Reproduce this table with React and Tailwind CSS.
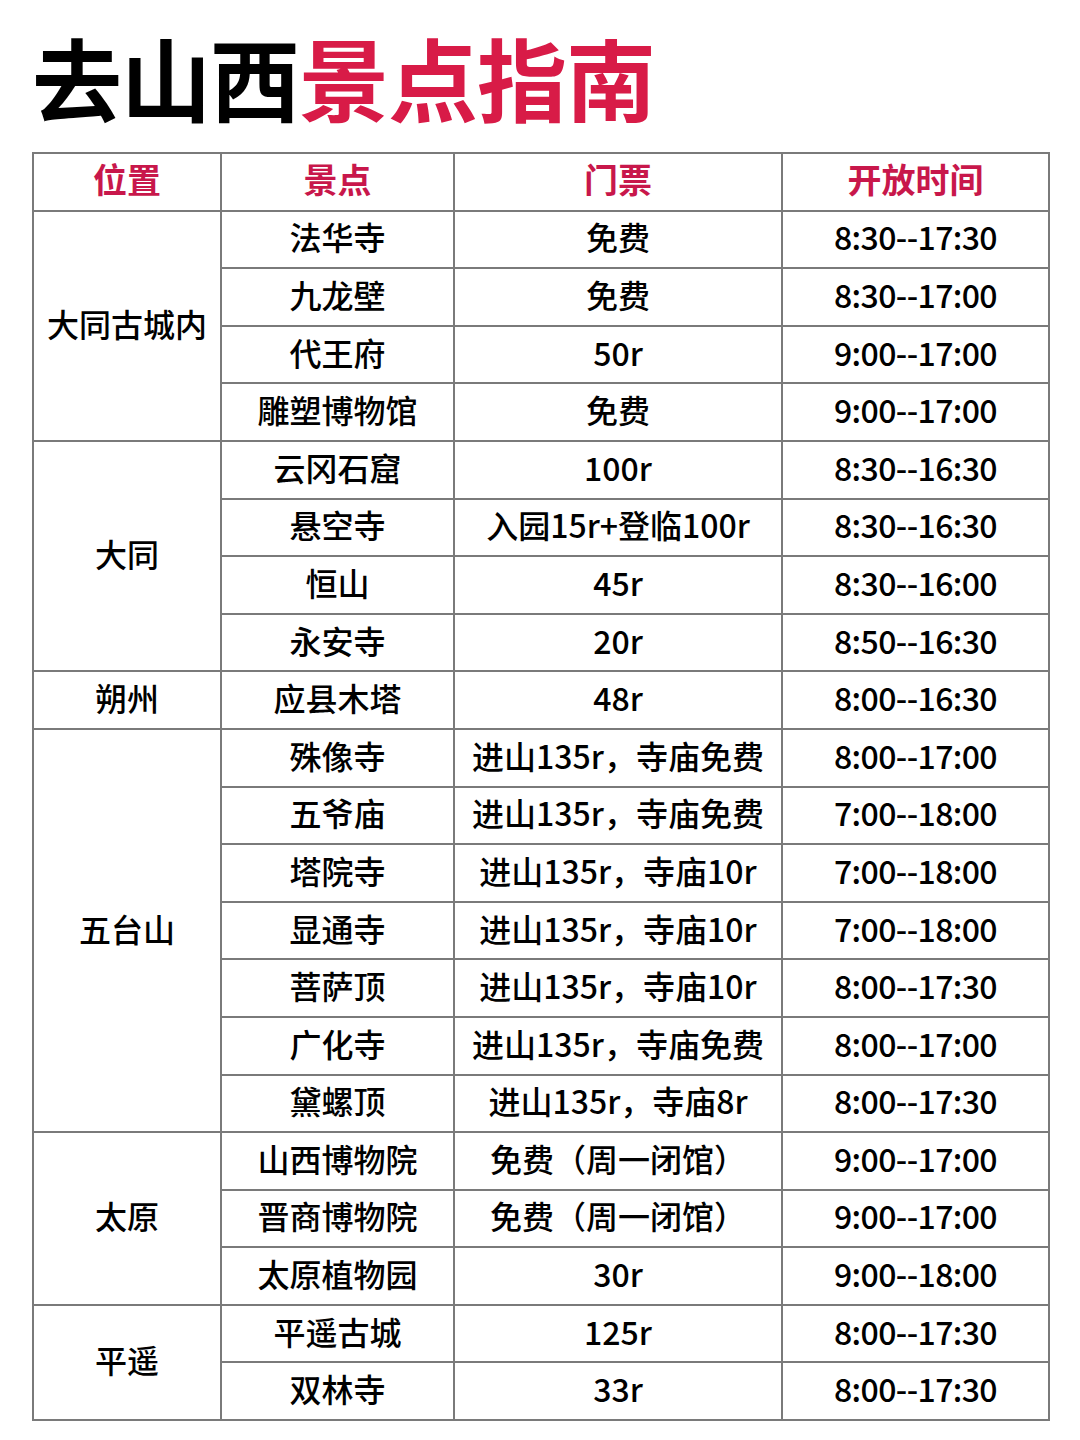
const groups = [
  {
    place: "大同古城内",
    rows: [
      ["法华寺", "免费", "8:30--17:30"],
      ["九龙壁", "免费", "8:30--17:00"],
      ["代王府", "50r", "9:00--17:00"],
      ["雕塑博物馆", "免费", "9:00--17:00"],
    ],
  },
  {
    place: "大同",
    rows: [
      ["云冈石窟", "100r", "8:30--16:30"],
      ["悬空寺", "入园15r+登临100r", "8:30--16:30"],
      ["恒山", "45r", "8:30--16:00"],
      ["永安寺", "20r", "8:50--16:30"],
    ],
  },
  {
    place: "朔州",
    rows: [["应县木塔", "48r", "8:00--16:30"]],
  },
  {
    place: "五台山",
    rows: [
      ["殊像寺", "进山135r，寺庙免费", "8:00--17:00"],
      ["五爷庙", "进山135r，寺庙免费", "7:00--18:00"],
      ["塔院寺", "进山135r，寺庙10r", "7:00--18:00"],
      ["显通寺", "进山135r，寺庙10r", "7:00--18:00"],
      ["菩萨顶", "进山135r，寺庙10r", "8:00--17:30"],
      ["广化寺", "进山135r，寺庙免费", "8:00--17:00"],
      ["黛螺顶", "进山135r，寺庙8r", "8:00--17:30"],
    ],
  },
  {
    place: "太原",
    rows: [
      ["山西博物院", "免费（周一闭馆）", "9:00--17:00"],
      ["晋商博物院", "免费（周一闭馆）", "9:00--17:00"],
      ["太原植物园", "30r", "9:00--18:00"],
    ],
  },
  {
    place: "平遥",
    rows: [
      ["平遥古城", "125r", "8:00--17:30"],
      ["双林寺", "33r", "8:00--17:30"],
    ],
  },
];

const cell = "border-2 border-[#7a7a7a] text-center align-middle h-[57.6px] p-0 pb-[6px]";

export default function App() {
  return (
    <div
      className="w-[1080px] h-[1440px] bg-white pl-[32px] pt-[31px]"
      style={{ fontFamily: '"Noto Sans CJK SC", "Noto Sans", sans-serif' }}
    >
      <h1 className="text-[90px] leading-none font-semibold tracking-[-1px] mb-[31px]">
        <span className="text-black">去山西</span>
        <span className="text-[#d81b47]">景点指南</span>
      </h1>

      <table className="border-collapse w-[1016px] table-fixed text-[32px] font-medium text-black leading-none">
        <colgroup>
          <col className="w-[188px]" />
          <col className="w-[233px]" />
          <col className="w-[328px]" />
          <col className="w-[267px]" />
        </colgroup>
        <thead>
          <tr className="text-[#c8174b] text-[34px] font-bold">
            <td className={cell}>位置</td>
            <td className={cell}>景点</td>
            <td className={cell}>门票</td>
            <td className={cell}>开放时间</td>
          </tr>
        </thead>
        <tbody>
          {groups.map((g) =>
            g.rows.map((r, i) => (
              <tr key={g.place + r[0]}>
                {i === 0 && (
                  <td className={cell} rowSpan={g.rows.length}>
                    {g.place}
                  </td>
                )}
                <td className={cell}>{r[0]}</td>
                <td className={cell + " whitespace-nowrap"}>{r[1]}</td>
                <td className={cell + " tracking-[-0.6px]"}>{r[2]}</td>
              </tr>
            ))
          )}
        </tbody>
      </table>
    </div>
  );
}
